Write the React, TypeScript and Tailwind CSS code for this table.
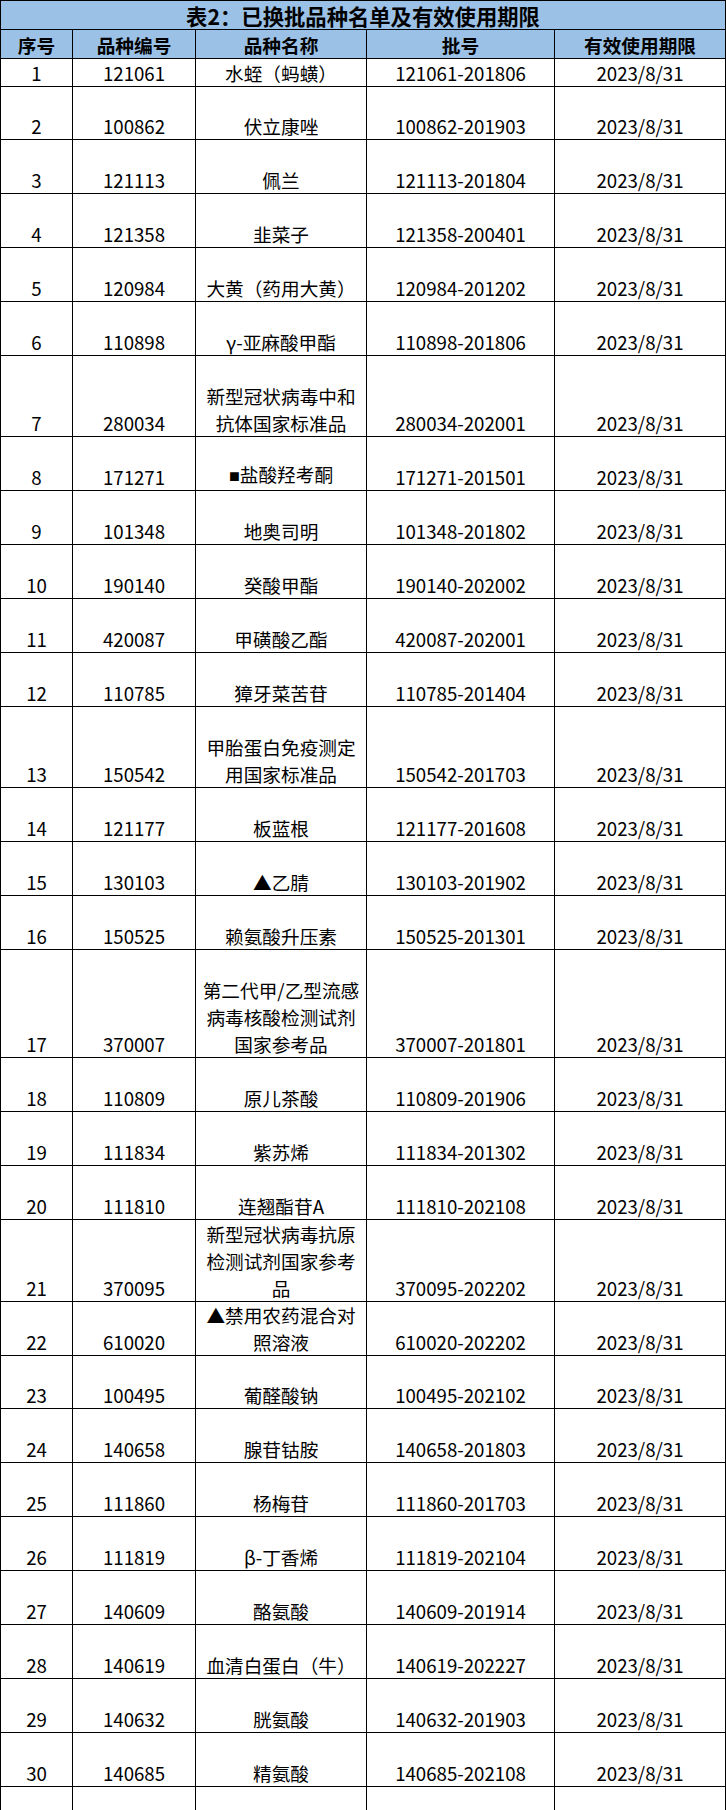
type Row = {
  no: number;
  code: string;
  name: string[];
  batch: string;
  h: string;
};

const rows: Row[] = [
  { no: 1, code: '121061', name: ['水蛭（蚂蟥）'], batch: '121061-201806', h: 'h-[27px]' },
  { no: 2, code: '100862', name: ['伏立康唑'], batch: '100862-201903', h: 'h-[54px]' },
  { no: 3, code: '121113', name: ['佩兰'], batch: '121113-201804', h: 'h-[54px]' },
  { no: 4, code: '121358', name: ['韭菜子'], batch: '121358-200401', h: 'h-[54px]' },
  { no: 5, code: '120984', name: ['大黄（药用大黄）'], batch: '120984-201202', h: 'h-[54px]' },
  { no: 6, code: '110898', name: ['γ-亚麻酸甲酯'], batch: '110898-201806', h: 'h-[54px]' },
  { no: 7, code: '280034', name: ['新型冠状病毒中和', '抗体国家标准品'], batch: '280034-202001', h: 'h-[81px]' },
  { no: 8, code: '171271', name: ['■盐酸羟考酮'], batch: '171271-201501', h: 'h-[54px]' },
  { no: 9, code: '101348', name: ['地奥司明'], batch: '101348-201802', h: 'h-[54px]' },
  { no: 10, code: '190140', name: ['癸酸甲酯'], batch: '190140-202002', h: 'h-[54px]' },
  { no: 11, code: '420087', name: ['甲磺酸乙酯'], batch: '420087-202001', h: 'h-[54px]' },
  { no: 12, code: '110785', name: ['獐牙菜苦苷'], batch: '110785-201404', h: 'h-[54px]' },
  { no: 13, code: '150542', name: ['甲胎蛋白免疫测定', '用国家标准品'], batch: '150542-201703', h: 'h-[81px]' },
  { no: 14, code: '121177', name: ['板蓝根'], batch: '121177-201608', h: 'h-[54px]' },
  { no: 15, code: '130103', name: ['▲乙腈'], batch: '130103-201902', h: 'h-[54px]' },
  { no: 16, code: '150525', name: ['赖氨酸升压素'], batch: '150525-201301', h: 'h-[54px]' },
  {
    no: 17,
    code: '370007',
    name: ['第二代甲/乙型流感', '病毒核酸检测试剂', '国家参考品'],
    batch: '370007-201801',
    h: 'h-[108px]',
  },
  { no: 18, code: '110809', name: ['原儿茶酸'], batch: '110809-201906', h: 'h-[54px]' },
  { no: 19, code: '111834', name: ['紫苏烯'], batch: '111834-201302', h: 'h-[54px]' },
  { no: 20, code: '111810', name: ['连翘酯苷A'], batch: '111810-202108', h: 'h-[54px]' },
  {
    no: 21,
    code: '370095',
    name: ['新型冠状病毒抗原', '检测试剂国家参考', '品'],
    batch: '370095-202202',
    h: 'h-[81px]',
  },
  { no: 22, code: '610020', name: ['▲禁用农药混合对', '照溶液'], batch: '610020-202202', h: 'h-[54px]' },
  { no: 23, code: '100495', name: ['葡醛酸钠'], batch: '100495-202102', h: 'h-[54px]' },
  { no: 24, code: '140658', name: ['腺苷钴胺'], batch: '140658-201803', h: 'h-[54px]' },
  { no: 25, code: '111860', name: ['杨梅苷'], batch: '111860-201703', h: 'h-[54px]' },
  { no: 26, code: '111819', name: ['β-丁香烯'], batch: '111819-202104', h: 'h-[54px]' },
  { no: 27, code: '140609', name: ['酪氨酸'], batch: '140609-201914', h: 'h-[54px]' },
  { no: 28, code: '140619', name: ['血清白蛋白（牛）'], batch: '140619-202227', h: 'h-[54px]' },
  { no: 29, code: '140632', name: ['胱氨酸'], batch: '140632-201903', h: 'h-[54px]' },
  { no: 30, code: '140685', name: ['精氨酸'], batch: '140685-202108', h: 'h-[54px]' },
];

const cols = 'grid grid-cols-[72px_123px_171px_188px_171px]';
const cell = 'flex items-end justify-center border-r border-b border-black';
const nameCell = 'flex flex-col items-center justify-end border-r border-b border-black text-center';
const headCell = 'flex items-center justify-center border-r border-b border-black font-bold';

// the square in row 8 is drawn smaller than the CJK glyphs
const NameLine = ({ text }: { text: string }) => {
  if (text[0] === '■') {
    return (
      <div>
        <span className="font-['Liberation_Sans',sans-serif] text-[18px]">■</span>
        {text.slice(1)}
      </div>
    );
  }
  return <div>{text}</div>;
};

export default function App() {
  return (
    <div className="w-[726px] bg-white font-['Noto_Sans_CJK_SC',sans-serif] text-[18.67px] leading-[27px] text-black">
      <div className="border-l border-t border-black">
        <div className="flex h-[29px] items-center justify-center border-r border-b border-black bg-[#9bc2e6] text-[21.33px] font-bold">
          表2：已换批品种名单及有效使用期限
        </div>
        <div className={`${cols} h-[29px] bg-[#9bc2e6]`}>
          <div className={headCell}>序号</div>
          <div className={headCell}>品种编号</div>
          <div className={headCell}>品种名称</div>
          <div className={headCell}>批号</div>
          <div className={headCell}>有效使用期限</div>
        </div>
        {rows.map((r) => (
          <div key={r.no} className={`${cols} ${r.h}`}>
            <div className={cell}>{r.no}</div>
            <div className={cell}>{r.code}</div>
            <div className={nameCell}>
              {r.name.map((line) => (
                <NameLine key={line} text={line} />
              ))}
            </div>
            <div className={cell}>{r.batch}</div>
            <div className={cell}>2023/8/31</div>
          </div>
        ))}
        <div className={`${cols} h-[24px]`}>
          <div className="border-r border-black" />
          <div className="border-r border-black" />
          <div className="border-r border-black" />
          <div className="border-r border-black" />
          <div className="border-r border-black" />
        </div>
      </div>
    </div>
  );
}
